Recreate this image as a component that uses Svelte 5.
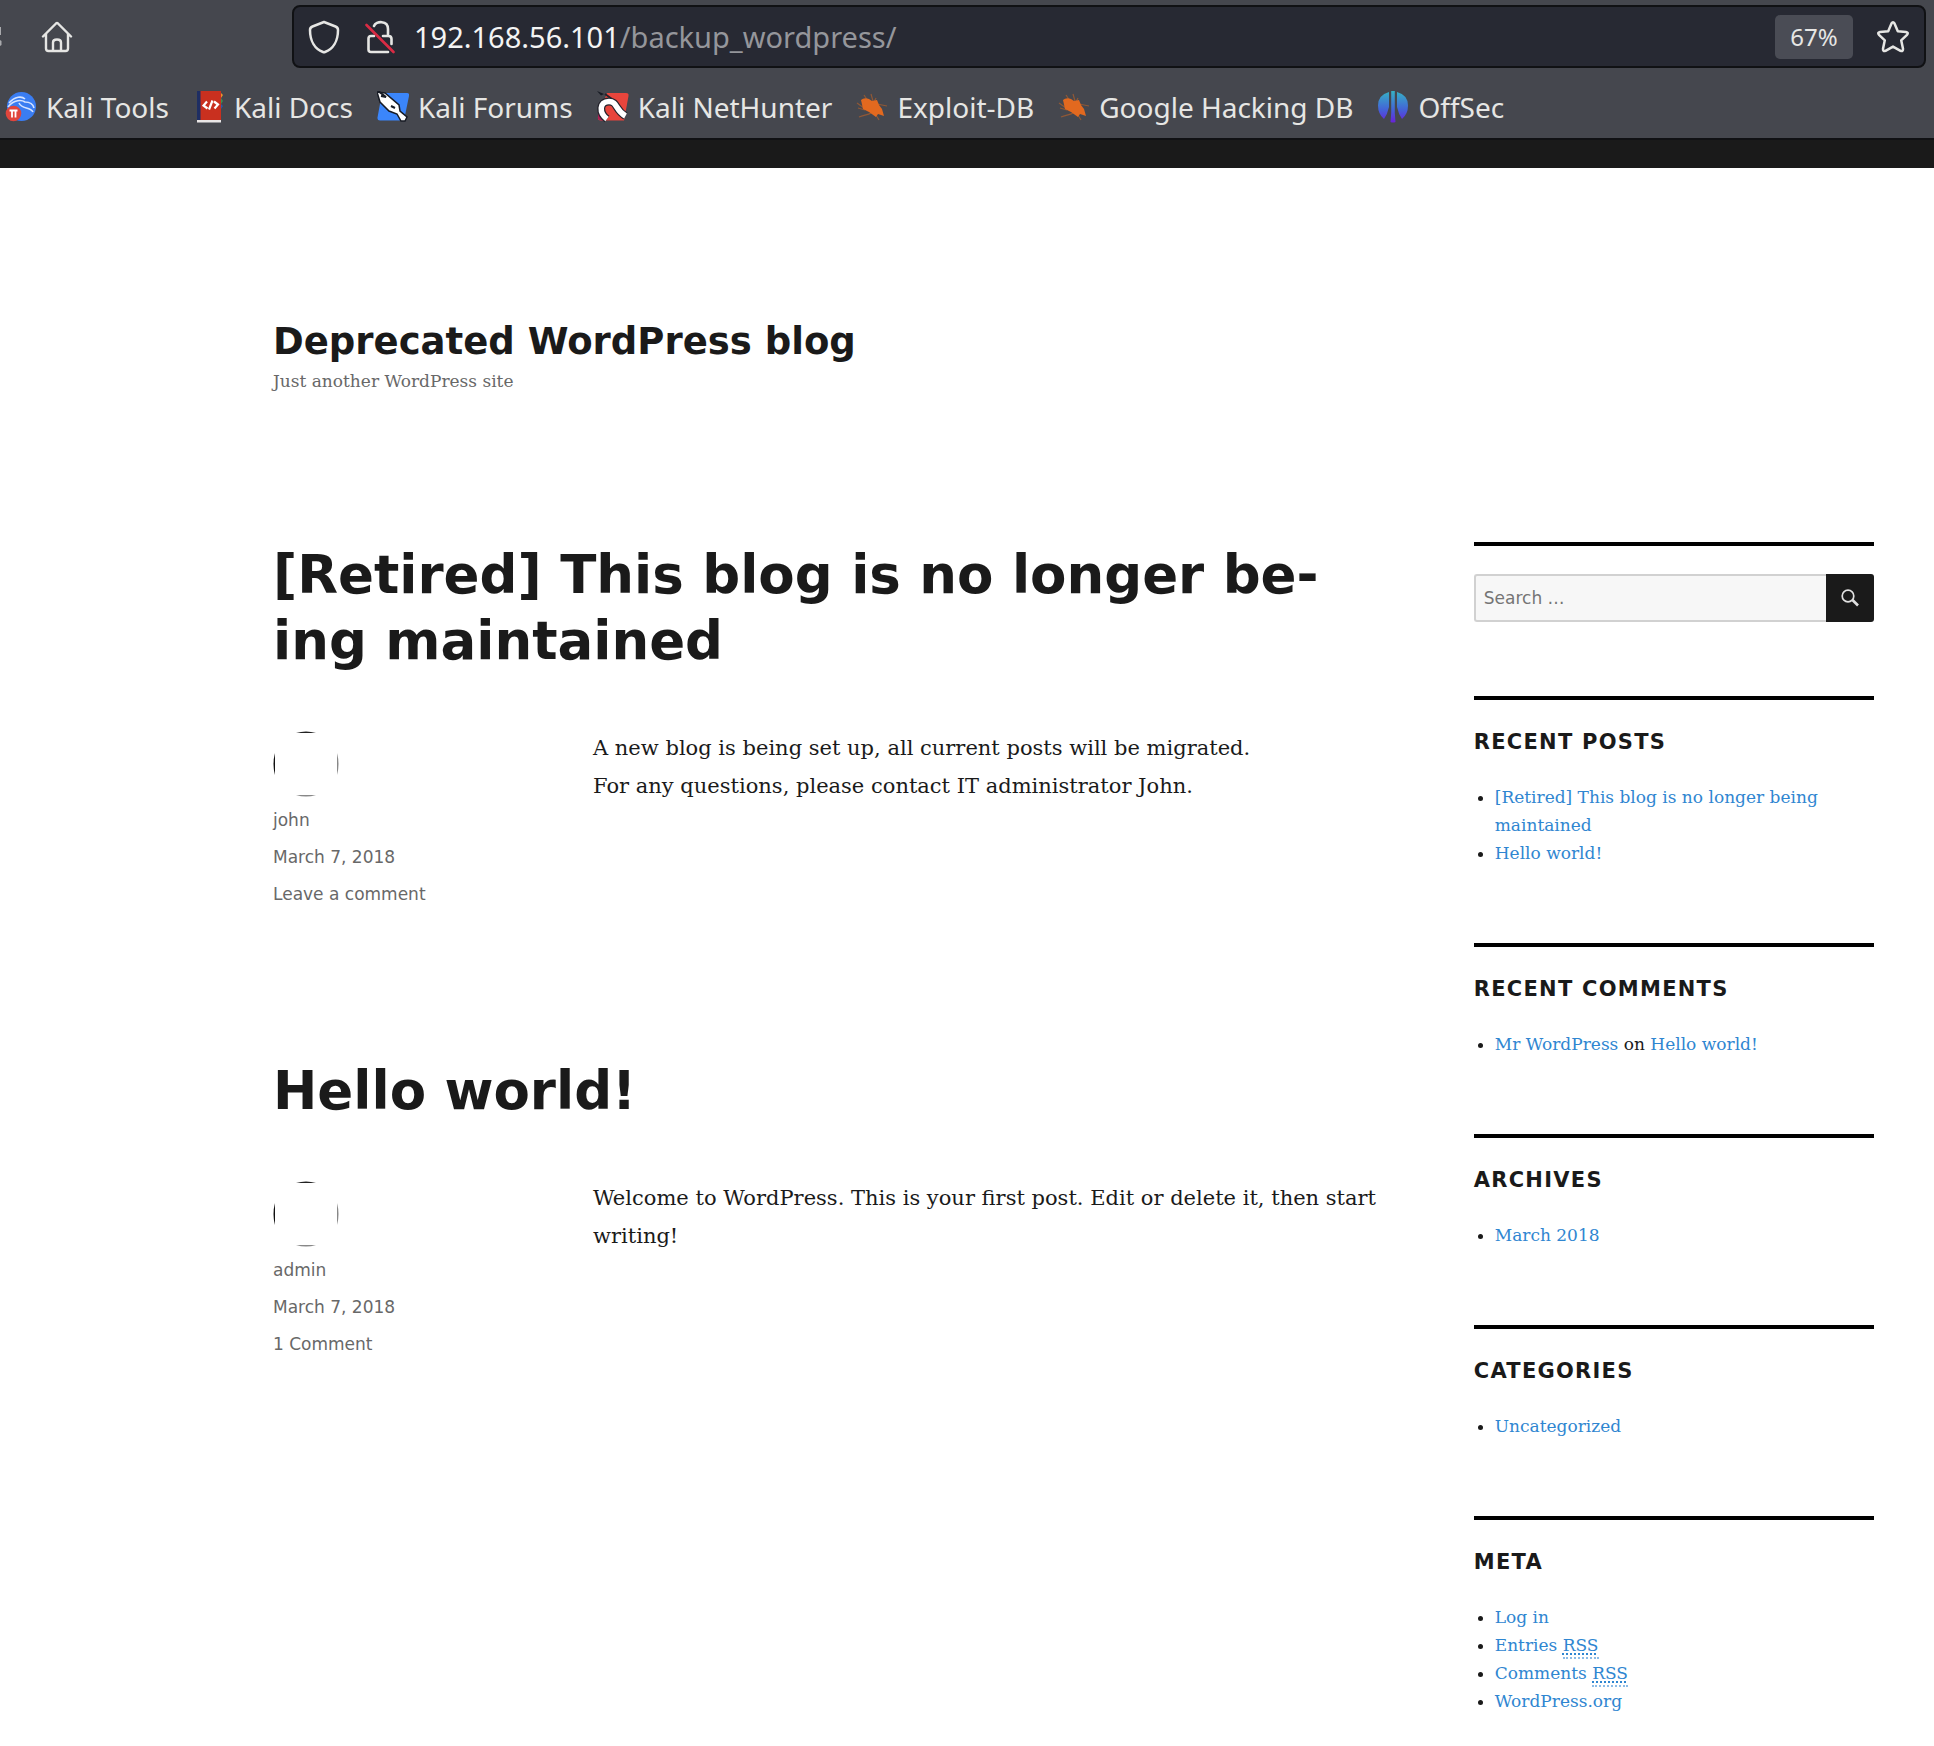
<script>
  const bookmarks = [
    { name: 'Kali Tools', icon: 'tools' },
    { name: 'Kali Docs', icon: 'docs' },
    { name: 'Kali Forums', icon: 'forums' },
    { name: 'Kali NetHunter', icon: 'nethunter' },
    { name: 'Exploit-DB', icon: 'bug' },
    { name: 'Google Hacking DB', icon: 'bug' },
    { name: 'OffSec', icon: 'offsec' },
  ];

  const posts = [
    {
      title: '[Retired] This blog is no longer be\u00ADing maintained',
      author: 'john',
      date: 'March 7, 2018',
      comments: 'Leave a comment',
      lines: ['A new blog is being set up, all current posts will be migrated.', 'For any questions, please contact IT administrator John.'],
    },
    {
      title: 'Hello world!',
      author: 'admin',
      date: 'March 7, 2018',
      comments: '1 Comment',
      lines: ['Welcome to WordPress. This is your first post. Edit or delete it, then start writing!'],
    },
  ];
</script>

<header class="browser">
  <div class="toolbar">
    <button class="tool" aria-label="Reload">
      <svg width="2" height="20" viewBox="0 0 2 20" fill="#a9aaad">
        <path d="M0 0H1V8H0ZM0 13 1.500 14V18L0 19Z" />
      </svg>
    </button>
    <button class="tool home" aria-label="Home">
      <svg width="32" height="32" viewBox="0 0 32 32" fill="none" stroke="#e6e6e4" stroke-width="2.4" stroke-linejoin="round" stroke-linecap="round">
        <path d="M2 15.500 15 2.500Q16 1.600 17 2.500L30 15.500M5 13V27.500Q5 30 7.500 30H24.500Q27 30 27 27.500V13M12 30V21.500Q12 18.500 16 18.500T20 21.500V30" />
      </svg>
    </button>
    <div class="address">
      <button class="tool" aria-label="Tracking protection">
        <svg width="32" height="34" viewBox="0 0 32 34" fill="none" stroke="#e6e6e4" stroke-width="2.500" stroke-linejoin="round">
          <path d="M16 2 27.500 6.500Q30 7.500 30 10C30 21 25 29 17 32Q16 32.400 15 32C7 29 2 21 2 10Q2 7.500 4.500 6.500Z" />
        </svg>
      </button>
      <button class="tool" aria-label="Connection not secure">
        <svg width="30" height="34" viewBox="0 0 30 34" fill="none" stroke="#e6e6e4" stroke-width="2.600" stroke-linecap="round">
          <path d="M9 6C11 0.800 23 0 23 9V15.500M9 16H6Q3.500 16 3.500 18.500V29.500Q3.500 32 6 32H23M18 16H23.500Q26.500 16 26.500 19V24" />
          <path d="M1.500 5 28.500 32" stroke="#d92b44" />
        </svg>
      </button>
      <div class="url"><span>192.168.56.101</span>/backup_wordpress/</div>
      <button class="zoom">67%</button>
      <button class="tool" aria-label="Bookmark this page">
        <svg width="34" height="34" viewBox="0 0 34 34" fill="none" stroke="#e6e6e4" stroke-width="2.500" stroke-linejoin="round">
          <path d="M15.500 3.500Q17 1 18.500 3.500L21.800 11.200 30 12Q33 12.600 31 14.800L25.200 20.300 27 28.800Q27.200 31.800 24.500 30.800L17 26.600 9.500 30.800Q6.800 31.800 7 28.800L8.800 20.300 3 14.800Q1 12.600 4 12L12.200 11.200Z" />
        </svg>
      </button>
    </div>
  </div>
  <nav class="bookmarks" aria-label="Bookmarks">
    {#each bookmarks as mark}
      <a href="#top">
        <svg width="32" height="32" viewBox="0 0 32 32" aria-hidden="true">
          {#if mark.icon === 'tools'}
            <circle cx="16.500" cy="15.500" r="14.500" fill="#3a7df2" />
            <path d="M4 12C10 5 17 5 20 8M3 16C9 8 17 9 20 11C24 11 28 13 29 17M14 12C17 19 25 15 28 21" fill="none" stroke="#d5e3ff" stroke-width="1.600" />
            <circle cx="8.500" cy="22.500" r="7.800" fill="#e0453c" />
            <path d="M4.500 19.500H12.500M7 19.500V26.500M10.500 19.500V26.500" fill="none" stroke="#fff" stroke-width="1.800" />
          {:else if mark.icon === 'docs'}
            <path d="M4 0H9V29H4Z" fill="#1e2e63" />
            <path d="M7.500 0H28V29H7.500Z" fill="#c9301f" />
            <path d="M28 2 30 4 28 7Z" fill="#e8922e" />
            <path d="M28 7 30 10 28 13Z" fill="#3e8f51" />
            <path d="M28 13 30 15 28 18Z" fill="#2d5aa8" />
            <path d="M4 29H28V31.500H4Z" fill="#e9e6e6" />
            <path d="M14 10.500 10.500 14.500 14.500 17.500M19.500 9.500 16 18.500M21 10.500 25 13.500 21.500 17.500" fill="none" stroke="#fff" stroke-width="2.200" />
          {:else if mark.icon === 'forums'}
            <path d="M5 2H30Q32.500 2 32 5L27.500 27Q27 29.500 24 29.500H3Q0 29.500 0.500 26.500Z" fill="#3b86fb" />
            <path d="M0 1 8 2 22 14 23 20 30 26 28 30 24 30 20 23 12 20 3 11Z" fill="#fff" stroke="#171b24" stroke-width="1.500" />
            <path d="M1 0 9 6 4 5M14 15 18 17" fill="none" stroke="#171b24" stroke-width="2" />
          {:else if mark.icon === 'nethunter'}
            <path d="M10 2H29Q32 2 31.500 5L27 29.500H4Q0 29.500 1 25Z" fill="#e8453c" />
            <path d="M1 22 1 28Q2 29.500 9 29.500L6 22Z" fill="#a91f55" />
            <path d="M0 0 7 3 4 4.500Z" fill="#171b24" />
            <path d="M10 28C2 22 2 10.500 12 10.500C20.500 10.500 18 19 28.500 25" fill="none" stroke="#24232c" stroke-width="8" />
            <path d="M8 3 15 8" stroke="#24232c" stroke-width="2" />
            <path d="M10 28C2 22 2 10.500 12 10.500C20.500 10.500 18 19 28.500 25" fill="none" stroke="#fff" stroke-width="5.500" />
          {:else if mark.icon === 'bug'}
            <path d="M1 12 8 17M8 4 12 10M15 3 17 10M20 7 18 11M21 13 31 15M3 26C8 24 12 24 15 22M20 24 23 29M2 17 9 19" fill="none" stroke="#8f5836" stroke-width="1.200" />
            <path d="M5 9Q8 6 13 8L16 10 21 9 23 14 26 18 28 25 22 23 20 26 13 21 7 18Z" fill="#e2691f" />
          {:else}
            <defs>
              <linearGradient id="offsec-fill" x1="0" y1="0" x2="0" y2="32" gradientUnits="userSpaceOnUse">
                <stop offset="0" stop-color="#35b3c4" />
                <stop offset="0.600" stop-color="#4460d8" />
                <stop offset="1" stop-color="#6a1fd8" />
              </linearGradient>
            </defs>
            <path d="M12 1V16Q10.500 23 7 28Q1 23 1 14.500Q1 4 12 1ZM14.200 0H17.800V22L18.500 31Q16 32 13.500 31L14.200 22ZM20 1Q31 4 31 14.500Q31 23 25 28Q21.500 23 20 16Z" fill="url(#offsec-fill)" />
          {/if}
        </svg>
        {mark.name}
      </a>
    {/each}
  </nav>
</header>

<div class="site" id="top">
  <div class="masthead">
    <h1><a href="#top">Deprecated WordPress blog</a></h1>
    <p>Just another WordPress site</p>
  </div>

  <div class="columns">
    <main>
      {#each posts as post}
        <article>
          <h2><a href="#top">{post.title}</a></h2>
          <div class="entry">
            <footer>
              <svg class="avatar" width="66" height="66" viewBox="0 0 66 66" aria-hidden="true">
                <path d="M23 2Q33 -1 43 2Z" fill="#222" />
                <path d="M2 22Q-1 33 2 44Z" fill="#111" />
                <path d="M64 22Q67 33 64 44Z" fill="#888" />
                <path d="M23 64Q33 67 43 64Z" fill="#888" />
              </svg>
              <a href="#top">{post.author}</a>
              <a href="#top"><time datetime="2018-03-07">{post.date}</time></a>
              <a href="#top">{post.comments}</a>
            </footer>
            <div class="content">
              {#each post.lines as line}
                <p>{line}</p>
              {/each}
            </div>
          </div>
        </article>
      {/each}
    </main>

    <aside>
      <section>
        <form class="search" role="search" onsubmit={(e) => e.preventDefault()}>
          <input type="search" placeholder="Search …" aria-label="Search for" />
          <button aria-label="Search">
            <svg width="20" height="20" viewBox="0 0 20 20" fill="none" stroke="#e0e0e0">
              <circle cx="8" cy="8" r="5.800" stroke-width="1.700" />
              <path d="M12.500 12 18 17.500" stroke-width="2.600" />
            </svg>
          </button>
        </form>
      </section>
      <section>
        <h3>Recent Posts</h3>
        <ul>
          <li><a href="#top">[Retired] This blog is no longer being maintained</a></li>
          <li><a href="#top">Hello world!</a></li>
        </ul>
      </section>
      <section>
        <h3>Recent Comments</h3>
        <ul>
          <li><a href="#top">Mr WordPress</a> on <a href="#top">Hello world!</a></li>
        </ul>
      </section>
      <section>
        <h3>Archives</h3>
        <ul><li><a href="#top">March 2018</a></li></ul>
      </section>
      <section>
        <h3>Categories</h3>
        <ul><li><a href="#top">Uncategorized</a></li></ul>
      </section>
      <section>
        <h3>Meta</h3>
        <ul>
          <li><a href="#top">Log in</a></li>
          <li><a href="#top">Entries <abbr title="Really Simple Syndication">RSS</abbr></a></li>
          <li><a href="#top">Comments <abbr title="Really Simple Syndication">RSS</abbr></a></li>
          <li><a href="#top">WordPress.org</a></li>
        </ul>
      </section>
    </aside>
  </div>
</div>

<style>
  :global(body) {
    margin: 0;
    background: #fff;
    color: #1a1a1a;
    font-family: 'DejaVu Serif', serif;
  }

  h1, h2, h3, p, ul {
    margin: 0;
    padding: 0;
  }

  a {
    color: inherit;
    text-decoration: none;
  }

  button {
    padding: 0;
    border: 0;
    background: none;
    color: inherit;
    font: inherit;
  }

  svg {
    display: block;
    flex: none;
  }

  .browser {
    background: #45474e;
    color: #e6e6e4;
    font-family: 'Noto Sans', sans-serif;
    border-bottom: 28px solid #1a1a1a;
  }

  .toolbar {
    display: flex;
    align-items: center;
    padding: 5px 8px 0 0;
  }

  .home {
    margin: 0 219px 0 39px;
  }

  .address {
    flex: 1;
    display: flex;
    align-items: center;
    box-sizing: border-box;
    height: 63px;
    padding: 0 14px;
    border: 2px solid #101114;
    border-radius: 8px;
    background: #272933;
  }

  .address .tool + .tool {
    margin-left: 25px;
  }

  .url {
    flex: 1;
    margin-left: 19px;
    color: #95969b;
    font-size: 29px;
    line-height: 40px;
    white-space: nowrap;
  }

  .url span {
    color: #f4f4f4;
  }

  .zoom {
    width: 78px;
    height: 44px;
    margin-right: 23px;
    border-radius: 5px;
    background: #4a4c55;
    font-size: 24px;
  }

  .bookmarks {
    display: flex;
    gap: 24px;
    height: 72px;
    padding: 9px 0 0 5px;
    box-sizing: border-box;
    border-bottom: 2px solid #101114;
  }

  .bookmarks a {
    display: flex;
    align-items: center;
    gap: 9px;
    height: 60px;
    font-size: 28px;
    white-space: nowrap;
  }

  .site {
    padding: 150px 60px 40px 273px;
  }

  h1 {
    font: bold 37px/48px 'DejaVu Sans', sans-serif;
  }

  .masthead p {
    margin-top: 1px;
    color: #686868;
    font-size: 17px;
    line-height: 28px;
  }

  .columns {
    display: grid;
    grid-template-columns: 1fr 25%;
    column-gap: 90px;
    align-items: start;
    margin-top: 147px;
  }

  article {
    margin-bottom: 145px;
  }

  h2 {
    font: bold 53px/66px 'DejaVu Sans', sans-serif;
  }

  .entry {
    display: grid;
    grid-template-columns: 320px 1fr;
    margin-top: 55px;
  }

  footer {
    display: flex;
    flex-direction: column;
    align-items: flex-start;
    color: #686868;
    font: 17px/37px 'DejaVu Sans', sans-serif;
  }

  .avatar {
    margin: 2px 0 5px;
  }

  .content {
    font-size: 21px;
    line-height: 38px;
  }

  section {
    padding: 28px 0 74px;
    border-top: 4px solid #000;
  }

  .search {
    display: flex;
  }

  .search input {
    flex: 1;
    min-width: 0;
    box-sizing: border-box;
    height: 48px;
    padding: 0 8px;
    border: 2px solid #d1d1d1;
    border-right: 0;
    border-radius: 3px 0 0 3px;
    background: #f7f7f7;
    font: 17px 'DejaVu Sans', sans-serif;
  }

  .search input::placeholder {
    color: #757575;
    opacity: 1;
  }

  .search button {
    display: grid;
    place-items: center;
    width: 48px;
    height: 48px;
    border-radius: 0 3px 3px 0;
    background: #1a1a1a;
  }

  h3 {
    margin-bottom: 27px;
    font: bold 21px/28px 'DejaVu Sans', sans-serif;
    letter-spacing: 0.06em;
    text-transform: uppercase;
  }

  ul {
    margin-bottom: 2px;
    padding-left: 21px;
    font-size: 17px;
    line-height: 28px;
  }

  li a {
    color: #2f86d1;
  }

  abbr {
    padding-bottom: 2px;
    border-bottom: 2px dotted #8dbce6;
    text-decoration: underline dotted 2px;
    text-underline-offset: 2px;
  }
</style>
